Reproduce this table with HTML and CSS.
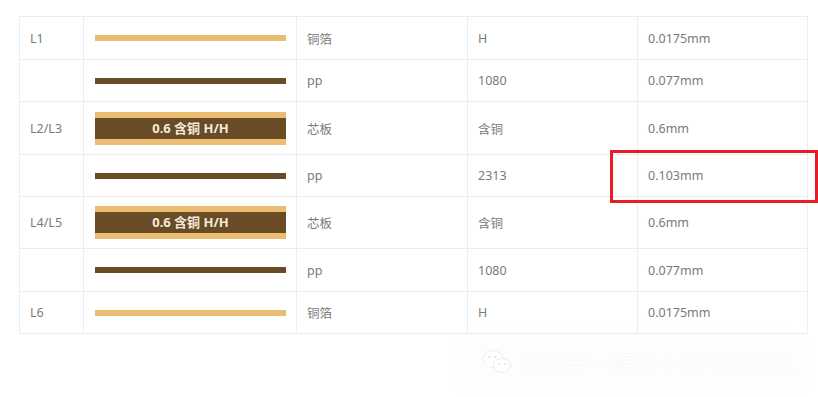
FILE: index.html
```html
<!DOCTYPE html>
<html lang="zh">
<head>
<meta charset="utf-8">
<link rel="stylesheet" href="styles.css">
</head>
<body>
<div class="page">
  <table class="stack">
    <colgroup>
      <col class="c1"><col class="c2"><col class="c3"><col class="c4"><col class="c5">
    </colgroup>
    <tr class="row r43">
      <td>L1</td>
      <td class="vis"><div class="bar foil"></div></td>
      <td>铜箔</td><td>H</td><td>0.0175mm</td>
    </tr>
    <tr class="row">
      <td></td>
      <td class="vis"><div class="bar pp"></div></td>
      <td>pp</td><td>1080</td><td>0.077mm</td>
    </tr>
    <tr class="row tall">
      <td>L2/L3</td>
      <td class="vis"><div class="core"><div class="core-mid">0.6 含铜 H/H</div></div></td>
      <td>芯板</td><td>含铜</td><td>0.6mm</td>
    </tr>
    <tr class="row">
      <td></td>
      <td class="vis"><div class="bar pp"></div></td>
      <td>pp</td><td>2313</td><td>0.103mm</td>
    </tr>
    <tr class="row tall2">
      <td>L4/L5</td>
      <td class="vis"><div class="core"><div class="core-mid">0.6 含铜 H/H</div></div></td>
      <td>芯板</td><td>含铜</td><td>0.6mm</td>
    </tr>
    <tr class="row r43">
      <td></td>
      <td class="vis"><div class="bar pp"></div></td>
      <td>pp</td><td>1080</td><td>0.077mm</td>
    </tr>
    <tr class="row">
      <td>L6</td>
      <td class="vis"><div class="bar foil"></div></td>
      <td>铜箔</td><td>H</td><td>0.0175mm</td>
    </tr>
  </table>
  <div class="highlight"></div>
  <div class="watermark">
    <svg class="wx" width="30" height="26" viewBox="0 0 30 26">
      <ellipse cx="11" cy="10" rx="10" ry="8.5" fill="#fff" stroke="#e8e8e8" stroke-width="0.8"/>
      <path d="M5 16 L4 20 L9 17 Z" fill="#fff"/>
      <ellipse cx="20" cy="16.5" rx="8.5" ry="7" fill="#fff" stroke="#e4e4e4" stroke-width="0.8"/>
      <path d="M24 22 L26 25 L21 23 Z" fill="#fff"/>
      <circle cx="7.5" cy="8" r="1.2" fill="#e6e6e6"/>
      <circle cx="13.5" cy="8" r="1.2" fill="#e6e6e6"/>
      <circle cx="17" cy="15" r="1" fill="#e6e6e6"/>
      <circle cx="23" cy="15" r="1" fill="#e6e6e6"/>
    </svg>
    <span class="wm-text">公众号 · 硬件十万个为什么</span>
  </div>
</div>
</body>
</html>
```
FILE: styles.css
```css
html, body {
  margin: 0;
  padding: 0;
  background: #fff;
}
.page {
  position: relative;
  width: 818px;
  height: 397px;
  padding: 16px 0 0 19px;
  box-sizing: border-box;
  font-family: "Noto Sans", "Noto Sans CJK SC", sans-serif;
}
.stack {
  border-collapse: collapse;
  table-layout: fixed;
  width: 788px;
  font-size: 12.5px;
  color: #7a7a7a;
}
.c1 { width: 64px; }
.c2 { width: 213px; }
.c3 { width: 171px; }
.c4 { width: 170px; }
.c5 { width: 170px; }
.stack td {
  border: 1px solid #ececf2;
  padding: 0 10px;
  vertical-align: middle;
  white-space: nowrap;
}
.row { height: 42px; }
.row.r43 { height: 43px; }
.row.tall { height: 53px; }
.row.tall2 { height: 52px; }
.stack td.vis {
  padding: 0 10px 0 11px;
}
.bar {
  height: 6px;
  width: 191px;
}
.bar.foil { background: #eabd72; }
.bar.pp { background: #694c25; }
.core {
  width: 191px;
  background: #eabd72;
  padding: 6px 0;
}
.core-mid {
  background: #694c25;
  height: 21px;
  line-height: 21px;
  text-align: center;
  color: #f3ebdf;
  font-weight: 700;
  font-size: 13px;
}
.highlight {
  position: absolute;
  left: 610px;
  top: 150px;
  width: 208px;
  height: 53px;
  border: 3px solid #e81c24;
  box-sizing: border-box;
}
.watermark {
  position: absolute;
  left: 462px;
  top: 340px;
  width: 340px;
  height: 44px;
  display: flex;
  align-items: center;
  gap: 8px;
  padding-left: 20px;
  box-sizing: border-box;
  background: rgba(0, 0, 0, 0.008);
  box-shadow: 0 0 20px 10px rgba(0, 0, 0, 0.012);
  border-radius: 16px;
}
.wm-text {
  font-size: 21px;
  letter-spacing: 2px;
  color: #fff;
  text-shadow: 0 0 2px rgba(0, 0, 0, 0.06);
  white-space: nowrap;
}
```
